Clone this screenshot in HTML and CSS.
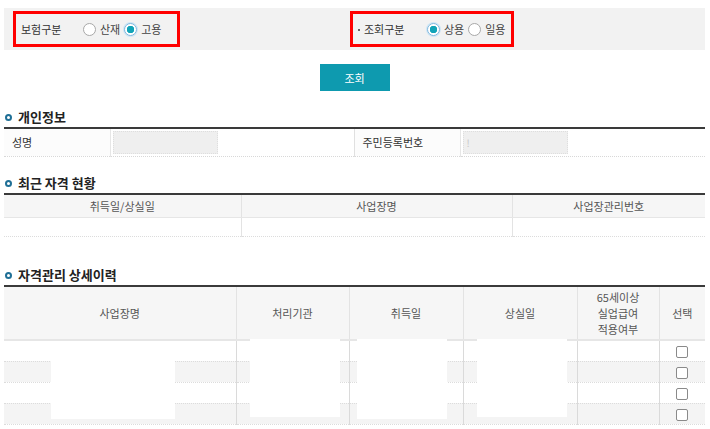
FILE: index.html
```html
<!DOCTYPE html>
<html>

<head>
  <meta charset="utf-8">
  <title>자격이력 조회</title>
  <link rel="stylesheet" href="styles.css">
</head>

<body>

  <div class="search_box">
    <div class="search_cell">
      <div class="search_group">
        <span class="search_label">보험구분</span>
        <input type="radio" name="ins" class="radio"><span class="radio_text">산재</span>
        <input type="radio" name="ins" class="radio" checked><span class="radio_text">고용</span>
      </div>
    </div>
    <div class="search_cell">
      <div class="search_group group_right">
        <span class="search_label dot">조회구분</span>
        <input type="radio" name="kind" class="radio" checked><span class="radio_text">상용</span>
        <input type="radio" name="kind" class="radio"><span class="radio_text">일용</span>
      </div>
    </div>
  </div>

  <div class="btn_area">
    <button class="btn_search">조회</button>
  </div>

  <h3 class="title">개인정보</h3>
  <table class="tbl tbl_info">
    <colgroup>
      <col style="width:106px"><col style="width:244px"><col style="width:106px"><col>
    </colgroup>
    <tr>
      <th>성명</th>
      <td><div class="mask"></div></td>
      <th>주민등록번호</th>
      <td><div class="mask"><span class="mask_mark">!</span></div></td>
    </tr>
  </table>

  <h3 class="title">최근 자격 현황</h3>
  <table class="tbl tbl_list">
    <colgroup>
      <col style="width:237px"><col style="width:271px"><col>
    </colgroup>
    <thead>
      <tr><th>취득일/상실일</th><th>사업장명</th><th>사업장관리번호</th></tr>
    </thead>
    <tbody>
      <tr class="row_short"><td></td><td></td><td></td></tr>
    </tbody>
  </table>

  <h3 class="title third">자격관리 상세이력</h3>
  <div class="hist_wrap">
    <table class="tbl tbl_list tbl_hist">
      <colgroup>
        <col style="width:232px"><col style="width:113px"><col style="width:114px"><col style="width:114px"><col style="width:82px"><col>
      </colgroup>
      <thead>
        <tr>
          <th>사업장명</th><th>처리기관</th><th>취득일</th><th>상실일</th>
          <th>65세이상<br>실업급여<br>적용여부</th><th>선택</th>
        </tr>
      </thead>
      <tbody>
        <tr><td></td><td></td><td></td><td></td><td></td><td><span class="chk"></span></td></tr>
        <tr class="even"><td></td><td></td><td></td><td></td><td></td><td><span class="chk"></span></td></tr>
        <tr><td></td><td></td><td></td><td></td><td></td><td><span class="chk"></span></td></tr>
        <tr class="even"><td></td><td></td><td></td><td></td><td></td><td><span class="chk"></span></td></tr>
      </tbody>
    </table>
    <!-- masked personal data -->
    <div class="cover cover_a"></div>
    <div class="cover cover_b"></div>
    <div class="cover cover_c"></div>
    <div class="cover cover_d"></div>
  </div>

</body>

</html>
```

FILE: styles.css
```css
body {
  margin: 0;
  padding: 0 5px 0 4px;
  font-family: "Noto Sans CJK KR", "Noto Sans", sans-serif;
  font-size: 11px;
  color: #333;
  background: #fff;
}

.search_box {
  display: grid;
  grid-template-columns: 346px 1fr;
  margin-top: 8px;
  height: 42px;
  background: #f2f2f2;
  align-items: center;
}

.search_cell {
  display: flex;
}

.search_group {
  display: flex;
  align-items: center;
  box-sizing: border-box;
  height: 36px;
  width: 167px;
  margin-left: 9px;
  padding-left: 5px;
  border: 3px solid #ff0000;
  white-space: nowrap;
}

.group_right {
  margin-left: 0;
  width: 164px;
}

.search_label {
  flex-shrink: 0;
  width: 62px;
  color: #333;
}

.dot {
  width: 69px;
}

.dot::before {
  content: "";
  display: inline-block;
  width: 2px;
  height: 2px;
  margin: 0 4px 3px 0;
  background: #666;
  vertical-align: middle;
}

.radio {
  appearance: none;
  -webkit-appearance: none;
  flex-shrink: 0;
  box-sizing: border-box;
  width: 13px;
  height: 13px;
  margin: 0 4px 0 0;
  border: 1px solid #a8a8a8;
  border-radius: 50%;
  background: #fff;
}

.radio:checked {
  border-color: #7db8e0;
  background: radial-gradient(circle, #12a4b8 0, #12a4b8 3.5px, #fff 4px);
  box-shadow: 0 0 0 1px #cfe6f5;
}

.radio_text {
  flex-shrink: 0;
  margin-right: 4px;
  color: #444;
}

.btn_area {
  text-align: center;
  margin-top: 14px;
  height: 27px;
}

.btn_search {
  width: 70px;
  height: 27px;
  border: 0;
  background: #0e9aaf;
  color: #fff;
  font-family: inherit;
  font-size: 11px;
  padding: 0;
}

.title {
  position: relative;
  margin: 18px 0 2px 0;
  padding-left: 14px;
  height: 16px;
  line-height: 16px;
  font-size: 13px;
  font-weight: bold;
  color: #222;
}

.title::before {
  content: "";
  position: absolute;
  left: 1px;
  top: 5px;
  width: 3px;
  height: 3px;
  border: 2px solid #1f6f96;
  border-radius: 50%;
}

.title.third {
  margin-top: 30px;
}

.tbl {
  width: 100%;
  table-layout: fixed;
  border-collapse: collapse;
  border-top: 2px solid #3a3a3a;
}

.tbl th,
.tbl td {
  padding: 0;
  font-weight: normal;
}

.tbl_info tr {
  height: 28px;
  border-bottom: 1px dotted #d8d8d8;
}

.tbl_info th {
  text-align: left;
  padding-left: 8px;
  background: #fcfcfc;
  border-right: 1px solid #e6e6e6;
  border-left: 1px solid #e0e0e0;
}

.tbl_info th:first-child {
  border-left: 0;
}

.tbl_info td {
  padding-left: 2px;
}

.mask {
  box-sizing: border-box;
  width: 105px;
  height: 23px;
  border: 1px dotted #dedede;
  background: #efefef;
  line-height: 21px;
}

.mask_mark {
  padding-left: 3px;
  color: #c8c8c8;
  font-size: 10px;
}

.tbl_list th {
  height: 22px;
  background: #f6f6f6;
  color: #555;
  text-align: center;
  border-left: 1px solid #e3e3e3;
  border-bottom: 1px solid #e6e6e6;
}

.tbl_list th:first-child,
.tbl_list td:first-child {
  border-left: 0;
}

.tbl_list td {
  border-left: 1px solid #e3e3e3;
  border-bottom: 1px dotted #dcdcdc;
}

.row_short td {
  height: 18px;
}

.hist_wrap {
  position: relative;
}

.tbl_hist th {
  height: 52px;
  line-height: 16px;
  border-bottom: 2px solid #e6e6e6;
}

.tbl_hist td {
  height: 20px;
  text-align: center;
  border-left-color: #dadada;
}

.tbl_hist tr.even td {
  background: #f4f4f4;
}

.chk {
  display: inline-block;
  box-sizing: border-box;
  width: 12px;
  height: 12px;
  margin-top: 3px;
  border: 1px solid #8a8a8a;
  border-radius: 2px;
  background: #fff;
  vertical-align: top;
}

.cover {
  position: absolute;
  background: #fff;
}

.cover_a {
  left: 47px;
  top: 75px;
  width: 124px;
  height: 59px;
}

.cover_b {
  left: 246px;
  top: 54px;
  width: 90px;
  height: 78px;
}

.cover_c {
  left: 353px;
  top: 54px;
  width: 90px;
  height: 80px;
}

.cover_d {
  left: 473px;
  top: 54px;
  width: 90px;
  height: 78px;
}
```
